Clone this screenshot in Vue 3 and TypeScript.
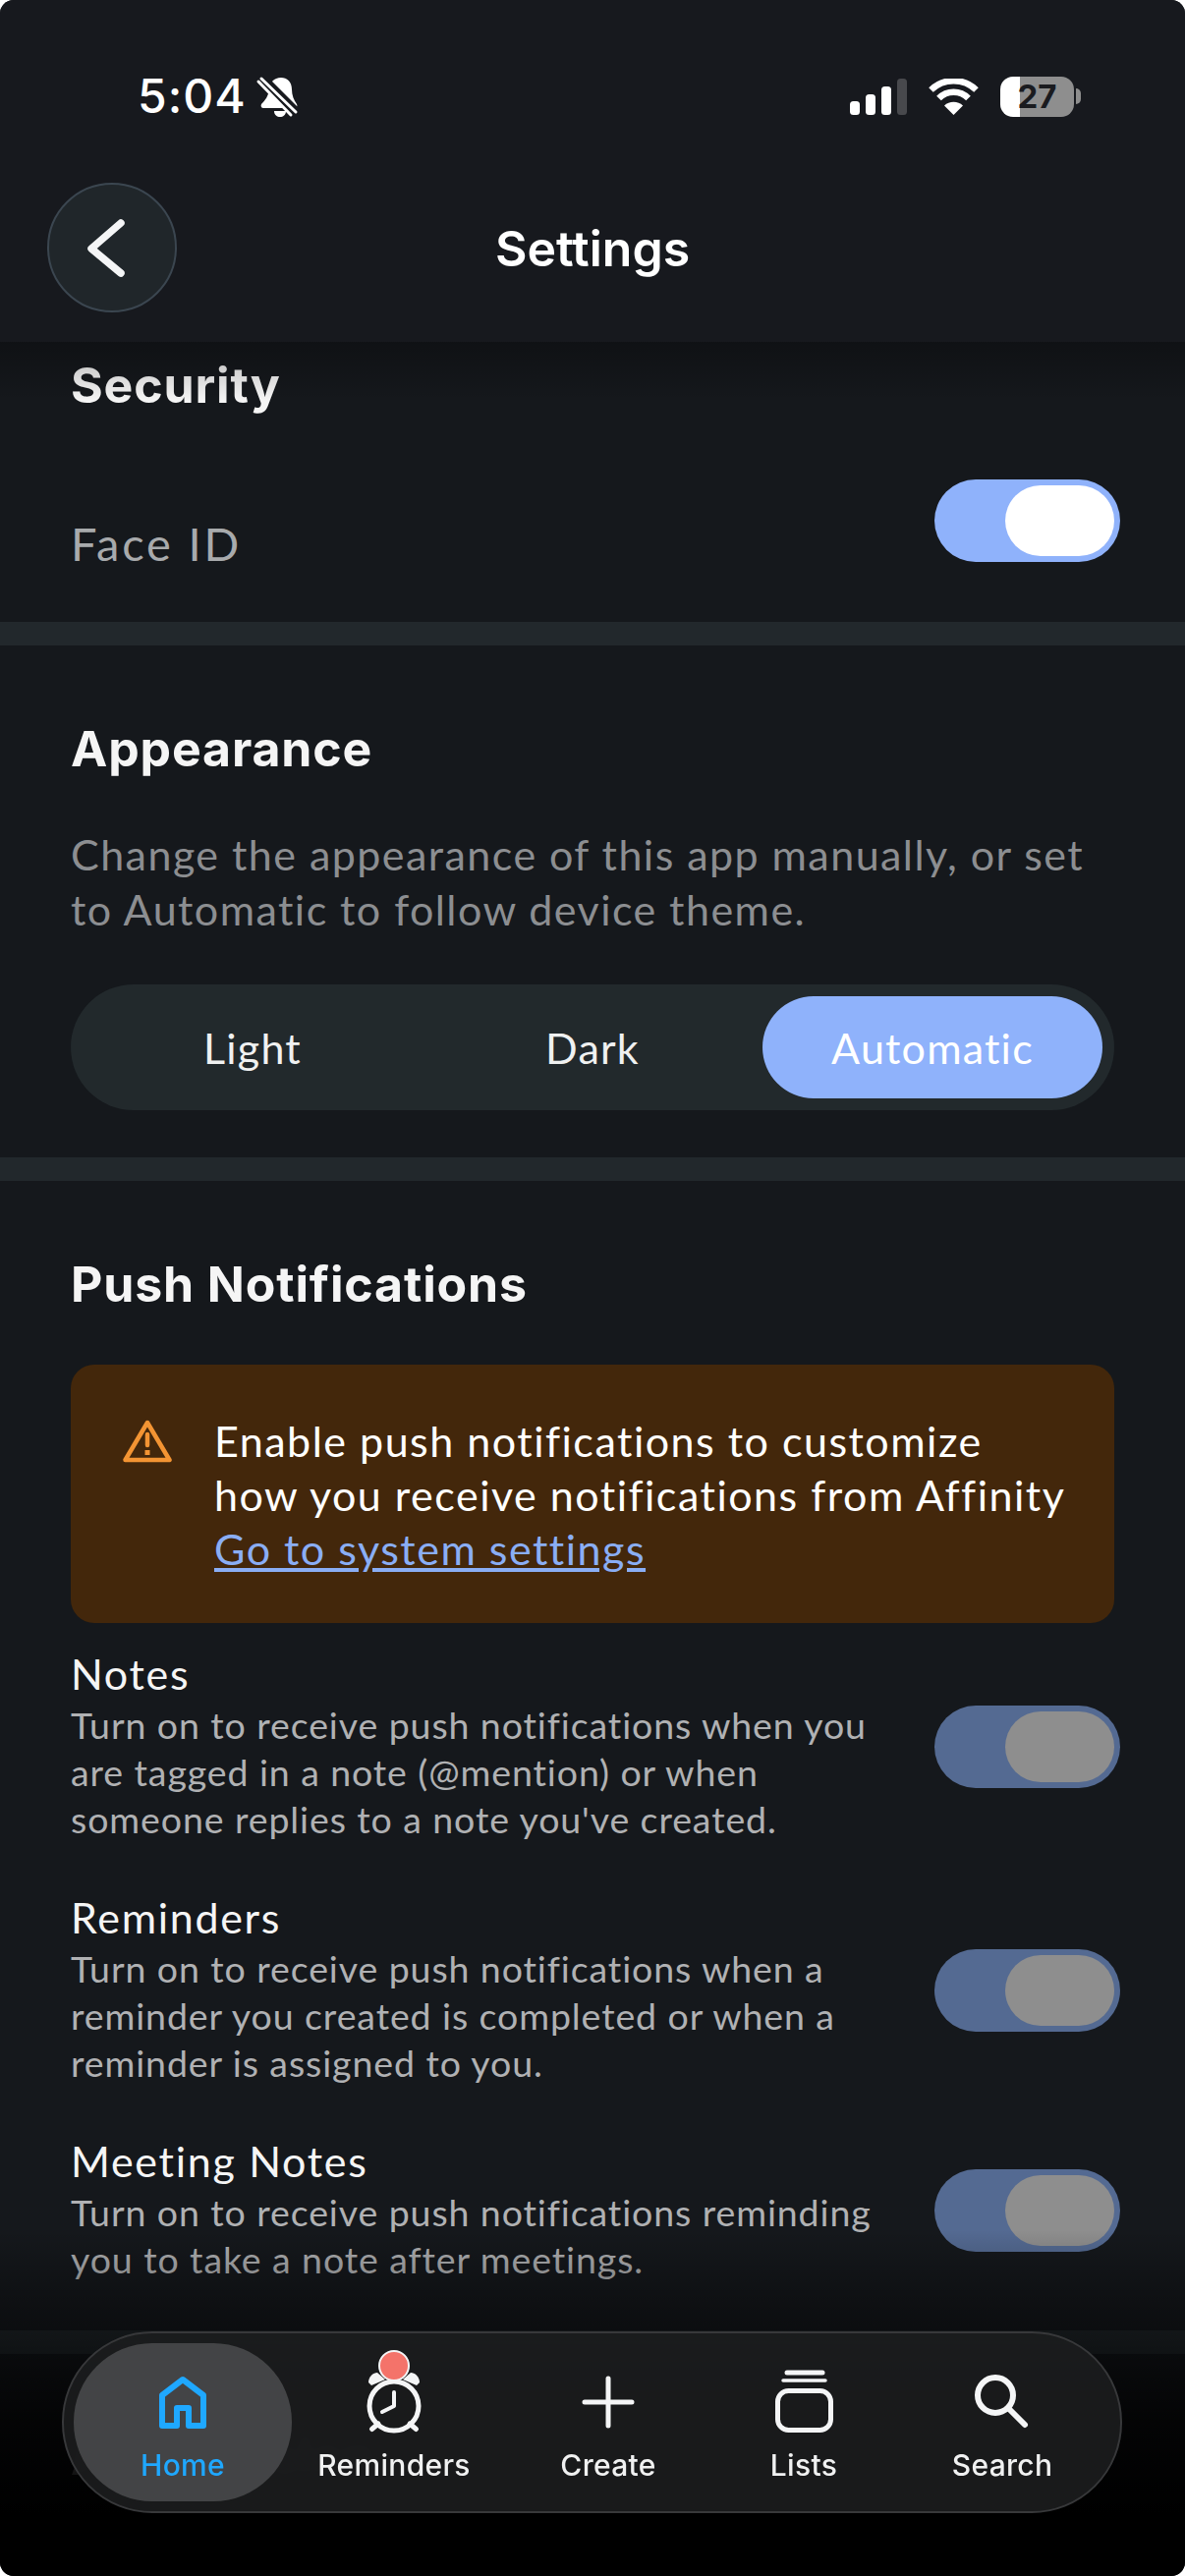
<script setup lang="ts">
interface NotificationRow {
  title: string;
  text: string;
}

const appearanceOptions: string[] = ["Light", "Dark", "Automatic"];

const leadText = "Change the appearance of this app manually, or set\nto Automatic to follow device theme.";
const alertText = "Enable push notifications to customize\nhow you receive notifications from Affinity";

const notificationRows: NotificationRow[] = [
  {
    title: "Notes",
    text: "Turn on to receive push notifications when you\nare tagged in a note (@mention) or when\nsomeone replies to a note you've created.",
  },
  {
    title: "Reminders",
    text: "Turn on to receive push notifications when a\nreminder you created is completed or when a\nreminder is assigned to you.",
  },
  {
    title: "Meeting Notes",
    text: "Turn on to receive push notifications reminding\nyou to take a note after meetings.",
  },
];
</script>

<template>
  <div class="phone">
    <header class="top">
      <div class="status">
        <div class="status-left">
          <span class="time">5:04</span>
          <svg class="bell" width="39" height="42" viewBox="0 0 39 42">
            <path fill="#fff" d="M22 2C28 2 33 6 33 14C33 20 35 25 38 29C39 31 38 33 36 33H4C2 33 1 31 2 29C6 25 9 21 10 14C10 7 15 2 22 2Z" />
            <path fill="#fff" d="M15 36H27C27 40 24 42 21 42C18 42 15 40 15 36Z" />
            <path stroke="#17191e" stroke-width="10" d="M1 1L38 38" />
            <path stroke="#fff" stroke-width="3" stroke-linecap="round" d="M2 3L37 37M-1 6L32 40" />
          </svg>
        </div>
        <div class="status-right">
          <svg width="58" height="37" viewBox="0 0 58 37">
            <rect x="0" y="23" width="10" height="14" rx="3.5" fill="#fff" />
            <rect x="16" y="16" width="10" height="21" rx="3.5" fill="#fff" />
            <rect x="32" y="8" width="10" height="29" rx="3.5" fill="#fff" />
            <rect x="48" y="0" width="10" height="37" rx="3.5" fill="#48494d" />
          </svg>
          <svg class="wifi" width="51" height="37" viewBox="0 0 51 37" fill="none">
            <path stroke="#fff" stroke-width="6.5" d="M2.5 11.5A33 33 0 0 1 48.5 11.5" />
            <path stroke="#fff" stroke-width="6.5" d="M10.5 20A21 21 0 0 1 40.5 20" />
            <path fill="#fff" d="M25.5 37L16 27.5A14 14 0 0 1 35 27.5Z" />
          </svg>
          <div class="battery"><span>27</span></div>
          <span class="battery-nub"></span>
        </div>
      </div>
      <div class="title-row">
        <button class="back" type="button" aria-label="Back">
          <svg width="60" height="60" viewBox="0 0 60 60" fill="none">
            <path d="M39 5L9 31L39 56" stroke="#f4f5f6" stroke-width="7.5" stroke-linecap="round" stroke-linejoin="round" />
          </svg>
        </button>
        <h1 class="page-title">Settings</h1>
      </div>
    </header>

    <div class="top-fade"></div>

    <main class="content">
      <section class="section security">
        <h2 class="heading">Security</h2>
        <div class="face-row">
          <span class="face-label">Face ID</span>
          <span class="toggle"><span class="knob"></span></span>
        </div>
      </section>

      <section class="section appearance">
        <h2 class="heading">Appearance</h2>
        <p class="lead">{{ leadText }}</p>
        <div class="segment">
          <span
            v-for="option in appearanceOptions"
            :key="option"
            class="segment-item"
            :class="{ active: option === 'Automatic' }"
          >{{ option }}</span>
        </div>
      </section>

      <section class="section push">
        <h2 class="heading">Push Notifications</h2>
        <div class="alert">
          <svg class="alert-icon" width="50" height="44" viewBox="0 0 50 44" fill="none">
            <path d="M25 3L47.5 41H2.5Z" stroke="#f39433" stroke-width="4.5" stroke-linejoin="round" />
            <path d="M25 15V26" stroke="#f39433" stroke-width="4.5" stroke-linecap="round" />
            <rect x="22.5" y="31" width="5" height="5" fill="#f39433" />
          </svg>
          <div class="alert-text">
            <p>{{ alertText }}</p>
            <a class="alert-link">Go to system settings</a>
          </div>
        </div>
        <div class="rows">
          <div v-for="row in notificationRows" :key="row.title" class="row">
            <div class="row-text">
              <div class="row-title">{{ row.title }}</div>
              <p class="row-desc">{{ row.text }}</p>
            </div>
            <span class="toggle dim"><span class="knob"></span></span>
          </div>
        </div>
      </section>

      <section class="section last">
        <h2 class="heading">App Version</h2>
      </section>
    </main>

    <div class="bottom-fade"></div>

    <nav class="tabs">
      <div class="tab active">
        <svg width="72" height="72" viewBox="0 0 72 72" fill="none">
          <path d="M15 59V28L36 12L57 28V59H42V41H30V59Z" stroke="#1fa8ff" stroke-width="6" stroke-linejoin="round" />
        </svg>
        <span>Home</span>
      </div>
      <div class="tab">
        <svg width="72" height="72" viewBox="0 0 72 72" fill="none">
          <circle cx="36" cy="39" r="25" stroke="#f4f5f6" stroke-width="5" />
          <path d="M36 25V39L24 45" stroke="#f4f5f6" stroke-width="4" stroke-linecap="round" stroke-linejoin="round" />
          <path d="M10 15C10 9 15 5 19 5L27 12L13 18Z" fill="#f4f5f6" />
          <path d="M62 15C62 9 57 5 53 5L45 12L59 18Z" fill="#f4f5f6" />
          <path d="M13.5 62.5L20 57M58.5 62.5L52 57" stroke="#f4f5f6" stroke-width="5" stroke-linecap="round" />
        </svg>
        <span class="badge"></span>
        <span>Reminders</span>
      </div>
      <div class="tab">
        <svg width="72" height="72" viewBox="0 0 72 72" fill="none">
          <path d="M36 11V59M12 35H60" stroke="#f4f5f6" stroke-width="5" stroke-linecap="round" />
        </svg>
        <span>Create</span>
      </div>
      <div class="tab">
        <svg width="72" height="72" viewBox="0 0 72 72" fill="none">
          <rect x="9.5" y="23.5" width="54" height="40" rx="11" stroke="#f4f5f6" stroke-width="5" />
          <path d="M15 13H58" stroke="#f4f5f6" stroke-width="3.5" stroke-linecap="round" />
          <path d="M19 5H55" stroke="#f4f5f6" stroke-width="5" stroke-linecap="round" />
        </svg>
        <span>Lists</span>
      </div>
      <div class="tab">
        <svg width="72" height="72" viewBox="0 0 72 72" fill="none">
          <circle cx="29" cy="28" r="18" stroke="#f4f5f6" stroke-width="6" />
          <path d="M42 41L59 58" stroke="#f4f5f6" stroke-width="6" stroke-linecap="round" />
        </svg>
        <span>Search</span>
      </div>
    </nav>
  </div>
</template>

<style scoped>
.phone {
  position: relative;
  width: 1206px;
  height: 2622px;
  overflow: hidden;
  border-radius: 14px;
  background: #15181c;
  font-family: "Lato", "Noto Sans", sans-serif;
  color: #f5f5f5;
}

/***** Header *****/
.top {
  height: 348px;
  box-sizing: border-box;
  padding-top: 77px;
  background: #17191e;
}
.status {
  height: 42px;
  display: flex;
  justify-content: space-between;
  padding: 0 106px 0 140px;
}
.status-left {
  display: flex;
  align-items: center;
  gap: 13px;
}
.time {
  font-family: "Inter", sans-serif;
  font-size: 48px;
  letter-spacing: 1px;
  font-weight: 500;
  line-height: 42px;
  color: #fff;
}
.bell {
  overflow: visible;
}
.status-right {
  display: flex;
  align-items: center;
}
.wifi {
  margin-left: 22px;
}
.battery {
  margin-left: 22px;
  width: 75px;
  height: 41px;
  border-radius: 13px;
  background: linear-gradient(90deg, #fff 27%, #8e8e8e 27%);
  display: flex;
  align-items: center;
  justify-content: center;
  font-family: "Inter", sans-serif;
  font-size: 33px;
  font-weight: 700;
  color: #1a1b1f;
}
.battery-nub {
  margin-left: 2px;
  width: 5px;
  height: 16px;
  border-radius: 0 8px 8px 0;
  background: #8e8e8e;
}
.title-row {
  margin-top: 67px;
  padding: 0 48px;
  display: grid;
  grid-template-columns: 132px 1fr 132px;
  align-items: center;
}
.back {
  width: 132px;
  height: 132px;
  padding: 0;
  box-sizing: border-box;
  border: 2px solid #3b4650;
  border-radius: 50%;
  background: #20262a;
  display: flex;
  align-items: center;
  justify-content: center;
}
.page-title {
  margin: 2px 0 0;
  text-align: center;
  font-family: "Inter", sans-serif;
  font-size: 50px;
  font-weight: 600;
  line-height: 60px;
  color: #fff;
}
.top-fade {
  position: absolute;
  top: 348px;
  left: 0;
  right: 0;
  height: 60px;
  background: linear-gradient(to bottom, rgba(0, 0, 0, 0.28), rgba(0, 0, 0, 0));
  pointer-events: none;
  z-index: 1;
}

/***** Sections *****/
.section {
  padding: 75px 72px 48px;
  border-bottom: 24px solid #22282c;
}
.section.security {
  padding-top: 14px;
  padding-bottom: 61px;
}
.section.last {
  border-bottom: none;
}
.heading {
  margin: 0;
  font-family: "Inter", sans-serif;
  font-size: 50px;
  font-weight: 700;
  letter-spacing: 0.85px;
  line-height: 60px;
  color: #f5f5f5;
}
.face-row {
  margin-top: 66px;
  display: flex;
  align-items: center;
  justify-content: space-between;
}
.face-label {
  align-self: flex-end;
  margin-bottom: -9px;
  font-size: 47px;
  letter-spacing: 2.8px;
  line-height: 56px;
  color: #a8aaac;
}
.toggle {
  flex: none;
  width: 189px;
  height: 84px;
  margin-right: -6px;
  box-sizing: border-box;
  padding: 6px;
  border-radius: 42px;
  background: #8fb2fb;
  display: flex;
  justify-content: flex-end;
}
.knob {
  width: 111px;
  height: 72px;
  border-radius: 36px;
  background: #fff;
}
.toggle.dim {
  background: #546a92;
}
.toggle.dim .knob {
  background: #8e8e8e;
}
.lead {
  margin: 50px 0 0;
  font-size: 43px;
  letter-spacing: 1.45px;
  line-height: 55.5px;
  color: #8c8e91;
  white-space: pre-line;
}
.segment {
  margin-top: 49px;
  height: 128px;
  box-sizing: border-box;
  padding: 12px;
  border-radius: 64px;
  background: #22292c;
  display: grid;
  grid-template-columns: repeat(3, 1fr);
}
.segment-item {
  display: flex;
  align-items: center;
  justify-content: center;
  border-radius: 52px;
  font-size: 43px;
  letter-spacing: 1.2px;
  color: #f0f1f1;
}
.segment-item.active {
  background: #8fb2fb;
  color: #fff;
}
.alert {
  margin-top: 52px;
  display: flex;
  gap: 43px;
  height: 263px;
  box-sizing: border-box;
  padding: 50px 30px 0 53px;
  border-radius: 24px;
  background: #43270b;
}
.alert-icon {
  flex: none;
  margin-top: 6px;
}
.alert-text {
  font-size: 43px;
  letter-spacing: 1.5px;
  line-height: 55px;
  color: #fff;
}
.alert-text p {
  margin: 0;
  white-space: pre-line;
}
.alert-link {
  color: #8aaef5;
  text-decoration: underline;
}
.rows {
  margin-top: 28px;
  display: flex;
  flex-direction: column;
  gap: 52px;
}
.row {
  display: flex;
  align-items: center;
  justify-content: space-between;
}
.row-title {
  font-size: 43px;
  letter-spacing: 1.7px;
  line-height: 48px;
  color: #f5f5f5;
}
.row-desc {
  margin: 4px 0 0;
  font-size: 37.5px;
  letter-spacing: 0.9px;
  line-height: 48px;
  color: #b0b1b3;
  white-space: pre-line;
}

/***** Bottom *****/
.bottom-fade {
  position: absolute;
  left: 0;
  right: 0;
  top: 2270px;
  height: 352px;
  background: linear-gradient(
    to bottom,
    rgba(0, 0, 0, 0),
    rgba(0, 0, 0, 0.32) 20%,
    rgba(0, 0, 0, 0.82) 55%,
    #000 82%
  );
  pointer-events: none;
  z-index: 1;
}
.tabs {
  position: absolute;
  left: 63px;
  bottom: 64px;
  z-index: 2;
  width: 1079px;
  height: 185px;
  box-sizing: border-box;
  padding: 10px 5px 0 10px;
  border: 2px solid #37383a;
  border-radius: 92px;
  background: rgba(28, 29, 30, 0.9);
  backdrop-filter: blur(6px);
  display: grid;
  grid-template-columns: 222px 208px 228px 170px 234px;
  grid-template-rows: 161px;
}
.tab {
  position: relative;
  display: flex;
  flex-direction: column;
  align-items: center;
  padding-top: 25px;
  box-sizing: border-box;
  font-family: "Inter", sans-serif;
  font-size: 30px;
  letter-spacing: 0.3px;
  font-weight: 500;
  line-height: 36px;
  color: #f0f1f1;
}
.tab span:last-child {
  margin-top: 9px;
}
.tab.active {
  border-radius: 80px;
  background: rgba(80, 81, 82, 0.78);
  color: #1fa8ff;
}
.badge {
  position: absolute;
  top: 7px;
  left: 50%;
  width: 28px;
  height: 28px;
  margin-left: -16px;
  border: 2px solid #f4f5f6;
  border-radius: 50%;
  background: #f4736a;
}
</style>

<style>
html,
body {
  background: #fff;
}
</style>
